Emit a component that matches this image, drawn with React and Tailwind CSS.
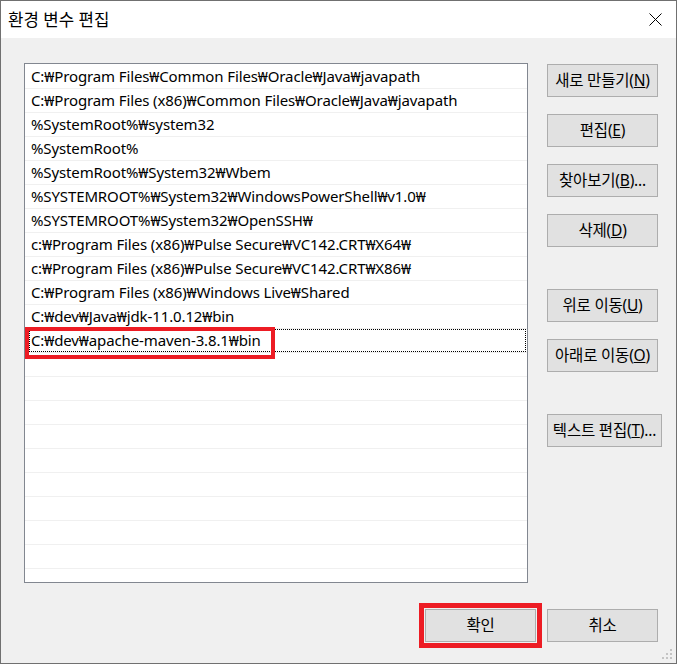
import React from "react";

const paths = [
  "C:₩Program Files₩Common Files₩Oracle₩Java₩javapath",
  "C:₩Program Files (x86)₩Common Files₩Oracle₩Java₩javapath",
  "%SystemRoot%₩system32",
  "%SystemRoot%",
  "%SystemRoot%₩System32₩Wbem",
  "%SYSTEMROOT%₩System32₩WindowsPowerShell₩v1.0₩",
  "%SYSTEMROOT%₩System32₩OpenSSH₩",
  "c:₩Program Files (x86)₩Pulse Secure₩VC142.CRT₩X64₩",
  "c:₩Program Files (x86)₩Pulse Secure₩VC142.CRT₩X86₩",
  "C:₩Program Files (x86)₩Windows Live₩Shared",
  "C:₩dev₩Java₩jdk-11.0.12₩bin",
  "C:₩dev₩apache-maven-3.8.1₩bin",
];

const FONT = { fontFamily: '"Noto Sans", "Noto Sans CJK KR", sans-serif' };

function Btn({ children, wide, className = "" }) {
  return (
    <div
      className={`h-[33px] ${wide ? "w-[115px]" : "w-[111px]"} bg-[#e1e1e1] border border-[#adadad] flex items-center justify-center text-[15.5px] tracking-[-0.2px] text-black whitespace-nowrap ${className}`}
    >
      {children}
    </div>
  );
}

function Key({ k }) {
  return (
    <span>
      (<span className="underline underline-offset-[1px]">{k}</span>)
    </span>
  );
}

export default function App() {
  const rows = [];
  for (let i = 0; i < 22; i++) rows.push(paths[i] || "");
  return (
    <div
      className="w-[677px] h-[664px] border border-[#707070] flex flex-col relative bg-[#f0f0f0] overflow-hidden"
      style={FONT}
    >
      <div className="h-[37px] bg-white flex items-center justify-between shrink-0">
        <span className="pl-[7px] text-[16.8px] text-black">환경 변수 편집</span>
        <svg width="13" height="13" viewBox="0 0 13 13" className="mr-[14px]">
          <path d="M0.5 0.5 L12.5 12.5 M12.5 0.5 L0.5 12.5" stroke="#000" strokeWidth="1" />
        </svg>
      </div>
      <div className="flex-1 flex flex-col pl-[23px] pt-[25px]">
        <div className="flex">
          <div className="w-[504px] h-[520px] bg-white border border-[#828790] pt-[1px] overflow-hidden relative">
            {rows.map((t, i) => (
              <div
                key={i}
                className="h-[24px] border-b border-[#f0f0f0] flex items-center relative"
              >
                {i === 11 && (
                  <div className="absolute left-[4px] right-[1px] top-0 bottom-0 border border-dotted border-[#000]" />
                )}
                <span className="pl-[6px] text-[15px] tracking-[-0.12px] text-black whitespace-nowrap leading-none">{t}</span>
              </div>
            ))}
          </div>
          <div className="ml-[19px] pt-[1px] flex flex-col">
            <Btn>새로 만들기<Key k="N" /></Btn>
            <Btn className="mt-[17px]">편집<Key k="E" /></Btn>
            <Btn className="mt-[17px]">찾아보기<Key k="B" />...</Btn>
            <Btn className="mt-[17px]">삭제<Key k="D" /></Btn>
            <Btn className="mt-[42px]">위로 이동<Key k="U" /></Btn>
            <Btn className="mt-[17px]">아래로 이동<Key k="O" /></Btn>
            <Btn wide className="mt-[42px]">텍스트 편집<Key k="T" />...</Btn>
          </div>
        </div>
        <div className="mt-[26px] flex justify-end pr-[18px] gap-[11px]">
          <Btn>확인</Btn>
          <Btn>취소</Btn>
        </div>
      </div>
      {/* annotation boxes */}
      <div className="absolute left-[24px] top-[326px] w-[250px] h-[32px] border-[4px] border-[#ed1c24]" />
      <div className="absolute left-[418px] top-[602px] w-[123px] h-[45px] border-[5px] border-[#ed1c24]" />
      {/* resize grip */}
      <svg width="12" height="12" viewBox="0 0 12 12" className="absolute right-[2px] bottom-[2px]">
        <rect x="8" y="0" width="2" height="2" fill="#c4c4c4" />
        <rect x="4" y="4" width="2" height="2" fill="#c4c4c4" />
        <rect x="8" y="4" width="2" height="2" fill="#c4c4c4" />
        <rect x="0" y="8" width="2" height="2" fill="#c4c4c4" />
        <rect x="4" y="8" width="2" height="2" fill="#c4c4c4" />
        <rect x="8" y="8" width="2" height="2" fill="#c4c4c4" />
      </svg>
    </div>
  );
}
